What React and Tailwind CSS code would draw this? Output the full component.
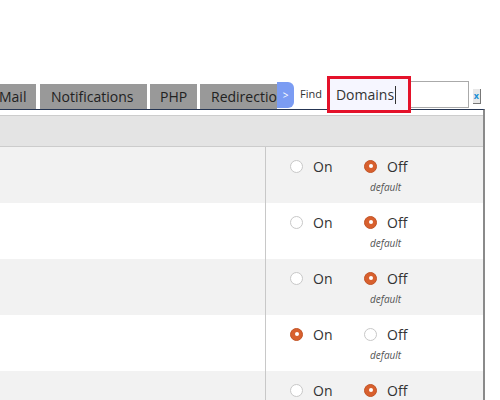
function Radio({ on }) {
    if (on) {
        return (
            <span className="w-[13px] h-[13px] rounded-full bg-[#d8602e] border border-[#c25426] flex items-center justify-center">
                <span className="w-[4px] h-[4px] rounded-full bg-white"></span>
            </span>
        );
    }
    return <span className="w-[13px] h-[13px] rounded-full bg-white border border-[#c8c8c8]"></span>;
}

function Row({ value, shade }) {
    const isOn = value === "on";
    return (
        <div className={`flex h-[56px] ${shade ? "bg-[#f2f2f2]" : "bg-white"}`}>
            <div className="w-[266px] border-r border-[#c8c8c8]"></div>
            <div className="flex-1 relative">
                <div className="absolute left-[24px] top-[12px] flex items-center h-[14px]">
                    <Radio on={isOn} />
                    <span className="ml-[10px] text-[14px] text-[#333]">On</span>
                </div>
                <div className="absolute left-[98px] top-[12px] flex items-center h-[14px]">
                    <Radio on={!isOn} />
                    <span className="ml-[10px] text-[14px] text-[#333]">Off</span>
                </div>
                <div className="absolute left-[104px] top-[33px] text-[10px] italic text-[#555]">default</div>
            </div>
        </div>
    );
}

function App() {
    const tabs = [
        { label: "Mail", cls: "w-[36px] pl-0", text: "ml-[-1px]" },
        { label: "Notifications", cls: "ml-[4px] w-[107px] pl-[11px]", text: "" },
        { label: "PHP", cls: "ml-[3px] w-[47px] pl-[10px]", text: "" },
        { label: "Redirections", cls: "ml-[3px] w-[77px] pl-[11px]", text: "" },
    ];
    const rows = ["off", "off", "off", "on", "off"];

    return (
        <div className="w-[500px] h-[400px] bg-white overflow-hidden font-['Open_Sans',sans-serif]">
            <div className="h-[81px]"></div>
            <div className="flex items-start h-[28px]">
                {tabs.map((t) => (
                    <div
                        key={t.label}
                        className={`${t.cls} mt-[3px] h-[25px] bg-[#999999] text-[14px] text-[#222] leading-[25px] overflow-hidden whitespace-nowrap`}
                    >
                        <span className={t.text}>{t.label}</span>
                    </div>
                ))}
                <div className="mt-[1px] w-[17px] h-[26px] bg-[#7b9cf3] rounded-r-[6px] text-white text-[10px] flex items-center justify-center">
                    &gt;
                </div>
                <div className="ml-[6px] h-[27px] flex items-center text-[11px] text-[#333]">Find</div>
                <div className="ml-[5px] relative w-[142px] h-[27px] border border-[#aaaaaa] bg-white">
                    <div className="absolute left-[-1px] top-[-6px] w-[84px] h-[37px] border-[3px] border-[#e4122a] bg-[#f6f6ff]"></div>
                    <div className="relative flex items-center h-full pl-[8px] text-[14px] font-stretch-[92%] text-[#333]">
                        Domains<span className="w-[1px] h-[18px] bg-[#333] ml-[1px]"></span>
                    </div>
                </div>
                <div className="ml-[4px] mt-[8px] w-[8px] h-[15px] bg-[#e8e8e8] border-r border-b border-[#777] text-[#1a8fd6] text-[9px] font-bold leading-[13px] text-center">
                    x
                </div>
            </div>
            <div className="w-[485px] border-t border-[#253553] border-r-2 border-r-[#8a8a8a] h-[300px] pt-[5px]">
                <div className="h-[32px] bg-[#e4e4e4] border-t border-b border-[#cccccc]"></div>
                {rows.map((r, i) => (
                    <Row key={i} value={r} shade={i % 2 === 0} />
                ))}
            </div>
        </div>
    );
}

export default App;
